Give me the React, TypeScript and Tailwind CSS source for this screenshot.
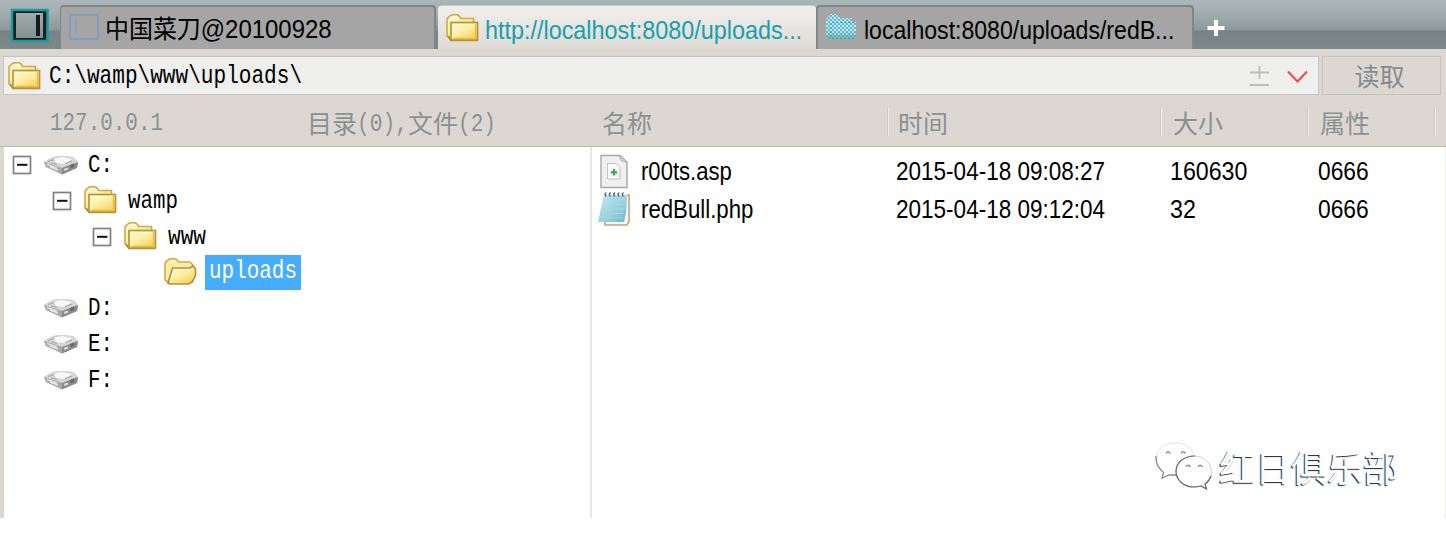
import { useLayoutEffect, useRef, useState } from "react";
import type { ReactNode } from "react";

/** Single line of condensed text stretched to the width of its box. */
function Fit({ className, children }: { className: string; children: ReactNode }) {
  const box = useRef<HTMLSpanElement>(null);
  const inner = useRef<HTMLSpanElement>(null);
  const [scale, setScale] = useState(1);
  useLayoutEffect(() => {
    if (box.current && inner.current && inner.current.offsetWidth) {
      setScale(box.current.clientWidth / inner.current.offsetWidth);
    }
  }, []);
  return (
    <span ref={box} className={"block shrink-0 whitespace-nowrap " + className}>
      <span ref={inner} className="inline-block origin-left" style={{ transform: `scaleX(${scale})` }}>
        {children}
      </span>
    </span>
  );
}

const sans = "font-['Liberation_Sans','Noto_Sans_CJK_SC',sans-serif] text-[25px] leading-[30px]";
const mono = "font-['Liberation_Mono','Noto_Sans_CJK_SC',monospace] text-[25px] leading-[30px] pt-[2px]";

function Folder({ className = "" }: { className?: string }) {
  return (
    <svg width="34" height="28" viewBox="0 0 34 28" className={"shrink-0 " + className}>
      <defs>
        <linearGradient id="fold" x1="0" y1="0" x2="0.7" y2="1">
          <stop offset="0" stopColor="#fffbdc" />
          <stop offset="0.55" stopColor="#feeda0" />
          <stop offset="1" stopColor="#f6d15f" />
        </linearGradient>
      </defs>
      <path d="M1 5 Q4 1 7 0.800 H11 Q13 1 14.500 4.500 H27.500 V25 H4 L1 22 Z" fill="url(#fold)" stroke="#cfa84e" strokeWidth="1.6" />
      <path d="M2 22 L5 26.500 H31.500" fill="none" stroke="#b08c35" strokeWidth="1.6" />
      <rect x="5" y="8.500" width="26.500" height="17.500" fill="url(#fold)" stroke="#bd9433" strokeWidth="1.7" />
      <path d="M29.500 10 V24.500 H7" fill="none" stroke="#e9bc4a" strokeWidth="1.3" />
      <path d="M7 24 V10.500 H28" fill="none" stroke="#fffbe0" strokeWidth="1.2" />
    </svg>
  );
}

function OpenFolder() {
  return (
    <svg width="34" height="28" viewBox="0 0 34 28" className="mb-[1px] shrink-0">
      <path d="M1 5 Q4 1 7 0.800 H11 Q13 1 14.500 4 H26 L28.500 6.500 V24 H4 L1 22 Z" fill="#fcedaa" stroke="#cfa84e" strokeWidth="1.6" />
      <path d="M4 25 L8.500 10 H26 L29 8 L31.500 11 V17 L28.500 23.500 L25 26 H6 Z" fill="url(#fold)" stroke="#b9902f" strokeWidth="1.7" />
      <path d="M6.500 23 L10 11.500 H27" fill="none" stroke="#fffbe0" strokeWidth="1.2" />
    </svg>
  );
}

function Drive() {
  return (
    <svg width="35" height="20" viewBox="0 0 35 20" className="shrink-0">
      <path d="M0 7 L9 2 L17 1 L29 2 L34 7 L33 13 L18 19.500 L11 16 L2 12 Z" fill="#b8b8b8" />
      <path d="M0 7 L9 2 L17 1 L29 2 L34 7 L18 13 Z" fill="#d6d6d6" />
      <path d="M10 4 L18 2 L28 4 L21 9 L12 8 Z" fill="#f8f8f8" />
      <path d="M0 7 L18 13 V19.500 L11 16 L2 12 Z" fill="#a8a8a8" />
      <path d="M18 13 L34 7 L33 13 L18 19.500 Z" fill="#8a8a8a" />
      <path d="M3 9.500 L13 13 M6 12 L14 15" stroke="#e2e2e2" strokeWidth="1.800" />
      <path d="M20 15 L24 13.500" stroke="#dadada" strokeWidth="2.200" />
      <path d="M26 10 L30 8.500 V12 L27 13 Z" fill="#666" />
      <path d="M4 6.500 L10 4.500 M7 8 L13 9.500 M21 8.500 L28 6" stroke="#a2a2a2" />
    </svg>
  );
}

function Minus() {
  return (
    <svg width="20" height="20" viewBox="0 0 20 20" className="shrink-0">
      <rect x="1.500" y="1.500" width="17" height="17" fill="#fff" stroke="#808080" strokeWidth="1.7" />
      <path d="M5 9.800 H15.500" stroke="#111" strokeWidth="2" />
    </svg>
  );
}

function WindowIcon() {
  return (
    <svg width="39" height="35" viewBox="0 0 39 35" className="shrink-0">
      <defs>
        <linearGradient id="win" x1="0" y1="0" x2="0" y2="1">
          <stop offset="0" stopColor="#a1abac" />
          <stop offset="1" stopColor="#849090" />
        </linearGradient>
      </defs>
      <rect x="2" y="2" width="35.500" height="31" fill="#1a1f1f" stroke="#199da3" strokeWidth="2.500" />
      <rect x="6" y="5" width="27" height="25" fill="url(#win)" />
      <rect x="26" y="7" width="4" height="21" fill="#161a1a" />
    </svg>
  );
}

function TerminalFolder() {
  return (
    <svg width="33" height="28" viewBox="0 0 33 28" className="mt-[6px] shrink-0">
      <defs>
        <pattern id="dots" width="4" height="4" patternUnits="userSpaceOnUse">
          <rect width="4" height="4" fill="#70b4cc" />
          <rect width="2" height="2" fill="#c8f4f4" />
          <rect x="2" y="2" width="2" height="2" fill="#b5ebe8" />
        </pattern>
        <linearGradient id="shade" x1="0" y1="0" x2="0" y2="1">
          <stop offset="0" stopColor="#60c9f0" stopOpacity="0.1" />
          <stop offset="0.7" stopColor="#60b9c8" stopOpacity="0.15" />
          <stop offset="1" stopColor="#4e9a8c" stopOpacity="0.75" />
        </linearGradient>
      </defs>
      <path d="M0 6 L5 1 H10 L14 5 H26 V9 H30 V26 H4 L0 22 Z" fill="url(#dots)" />
      <path d="M0 6 L5 1 H10 L14 5 H26 V9 H30 V26 H4 L0 22 Z" fill="url(#shade)" />
      <path d="M5 24 V9.500 H29" fill="none" stroke="#4a9cab" strokeDasharray="2 2" strokeWidth="1.2" />
    </svg>
  );
}

function AspFile() {
  return (
    <svg width="28" height="35" viewBox="0 0 28 35" className="shrink-0">
      <path d="M1 1.500 H20 L27 8 V33.500 H1 Z" fill="#efefef" stroke="#a8a8a8" strokeWidth="1.4" />
      <path d="M20 1.500 Q19 8 27 8 Z" fill="#d8d8d8" stroke="#aaa" />
      <path d="M7.500 9.500 H16 L20 13.500 V25 H7.500 Z" fill="#fafafa" stroke="#c3c3c3" />
      <path d="M14 15 V21.500 M10.800 18.300 H17.200" stroke="#37ad4d" strokeWidth="2.200" />
    </svg>
  );
}

function Notepad() {
  return (
    <svg width="34" height="36" viewBox="0 0 34 36" className="shrink-0">
      <defs>
        <linearGradient id="note" x1="0" y1="0" x2="1" y2="1">
          <stop offset="0" stopColor="#c6e8ef" />
          <stop offset="0.6" stopColor="#98d0de" />
          <stop offset="1" stopColor="#6cb4c8" />
        </linearGradient>
      </defs>
      <path d="M30 4 H32 V31 L30 34 H8 V31" fill="#f8f6f0" stroke="#c1a384" strokeWidth="1.6" />
      <path d="M7 4 H30 L29 22 L27 31 H1 L5 12 Z" fill="url(#note)" />
      <path d="M8 9 H28 M7 13.5 H27.5 M6 18 H27 M5 22.5 H26.5 M4 27 H26" stroke="#a8d8e2" strokeWidth="0.9" />
      <path d="M9 5.500 Q7 2 9.500 2 M13.300 5.500 Q11.300 2 13.800 2 M17.600 5.500 Q15.600 2 18.100 2 M21.900 5.500 Q19.900 2 22.400 2 M26.200 5.500 Q24.200 2 26.700 2" fill="none" stroke="#4c6a7a" strokeWidth="1.5" />
    </svg>
  );
}

function ChatLogo() {
  return (
    <svg width="60" height="52" viewBox="0 0 60 52" className="shrink-0">
      <path d="M40 15 C36 6 30 3 21 3 C9 3 2 10 2 19" fill="#fff" stroke="#e4e4e4" />
      <path d="M2 16 C1.500 25 5 28 9.500 32.500 L8 38 L15 35 H22" fill="none" stroke="#8a8a8a" strokeWidth="1.3" />
      <path d="M40 16 C29 16 22 23 22 31.500 C22 40 30 47 40 47 C43 47 45 46.500 47 46 L52.500 49 L51 44 C55 41 57.500 37 57.500 32 C57.500 23 50 16 40 16 Z" fill="#fff" stroke="#ccc" strokeWidth="0.9" />
      <path d="M41 16 C29 16 22 23 22 31.500 C22 40 30 47 40 47 C43 47 45 46.500 47 46 L52.500 49 L51 44 C54 42 56 39 57 36" fill="none" stroke="#666" strokeWidth="1.2" />
      <path d="M12 13.500 Q14 10 16.500 13.500 M27 13.500 Q29 10 31.500 13.500 M32 27 Q34 23.500 36.500 27 M44 27 Q46 23.500 48.500 27" fill="none" stroke="#8b8b8b" strokeWidth="1.3" />
    </svg>
  );
}

const drives = ["D:", "E:", "F:"];

export default function App() {
  return (
    <div className="flex h-[534px] w-[1446px] flex-col overflow-hidden bg-white text-black">
      <div className="flex h-[49px] shrink-0 bg-[linear-gradient(#abb6b9_0%,#a6b1b3_20%,#8e999b_60%,#788385_64%,#7c8788_100%)]">
        <div className="pl-[10px] pt-[8px]">
          <WindowIcon />
        </div>
        <div className="ml-[11px] mt-[5px] flex h-11 w-[376px] rounded-t-sm border-t-2 border-r-2 border-l border-[#7d8789] bg-[#a5a5a5] pl-2">
          <svg width="31" height="27" viewBox="0 0 31 27" className="mt-[7px] shrink-0">
            <rect x="1" y="1" width="28" height="24" fill="none" stroke="#7fa0bd" strokeWidth="2" />
            <path d="M7 6 V19" stroke="#7fa0bd" strokeWidth="1.600" />
          </svg>
          <Fit className={`${sans} ml-[5px] mt-[7px] w-[227px]`}>中国菜刀@20100928</Fit>
        </div>
        <div className="ml-[2px] mt-[5px] flex h-11 w-[378px] rounded-t-sm border-t border-[#c9cbc9] bg-gradient-to-b from-[#f1efed] to-[#dedad5] pl-[8px]">
          <Folder className="mt-[8px]" />
          <Fit className={`${sans} ml-[5px] mt-[9px] w-[317px] text-[#16a0ad]`}>http://localhost:8080/uploads...</Fit>
        </div>
        <div className="mt-[5px] flex h-11 w-[378px] rounded-t-sm border-x-2 border-t-2 border-[#7d8789] bg-[#a5a5a5] pl-[8px]">
          <TerminalFolder />
          <Fit className={`${sans} ml-[5px] mt-[8px] w-[310px]`}>localhost:8080/uploads/redB...</Fit>
        </div>
        <svg width="18" height="18" viewBox="0 0 18 18" className="ml-[13px] mt-[19px]">
          <path d="M9 1 V17 M0.500 9 H17.500" stroke="#fff" strokeWidth="4" />
        </svg>
      </div>

      <div className="flex h-[98px] shrink-0 flex-col border-b border-[#b9bbb5] bg-[#dcd8d1]">
        <div className="flex h-[46px] pl-[3px] pt-[7px]">
          <div className="flex h-[39px] w-[1316px] items-center border border-[#c5c6c1] bg-[#efefee] pl-1">
            <Folder />
            <Fit className={`${mono} ml-[7px] w-[253px]`}>C:\wamp\www\uploads\</Fit>
            <svg width="60" height="24" viewBox="0 0 60 24" className="mr-[9px] ml-auto">
              <path d="M10.500 2 V15 M1 8.500 H20 M1 21 H20" fill="none" stroke="#bdbdbd" strokeWidth="1.800" />
              <path d="M39 7.500 L48.500 17.500 L58 7.500" fill="none" stroke="#f0484e" strokeWidth="2" />
            </svg>
          </div>
          <div className="ml-[3px] flex h-[39px] w-[119px] justify-center border border-[#c5c5bf] pr-1 pt-[5px]">
            <Fit className={`${sans} w-[50px] text-[#858b91]`}>读取</Fit>
          </div>
        </div>
        <div className="flex h-[51px] pt-[14px] text-[#8b9094]">
          <Fit className={`${mono} ml-[50px] mt-[-2px] w-[113px]`}>127.0.0.1</Fit>
          <div className="ml-[144px] flex">
            <Fit className={`${sans} w-[50px]`}>目录</Fit>
            <Fit className={`${mono} mt-[-1px] w-[51px]`}>(0),</Fit>
            <Fit className={`${sans} w-[50px]`}>文件</Fit>
            <Fit className={`${mono} mt-[-1px] w-[38px]`}>(2)</Fit>
          </div>
          <Fit className={`${sans} ml-[106px] w-[50px]`}>名称</Fit>
          <div className="mt-[-1px] ml-[235px] h-7 w-[2px] border-r border-l border-r-[#efedea] border-l-[#cfcbc5]" />
          <Fit className={`${sans} ml-[9px] w-[50px]`}>时间</Fit>
          <div className="mt-[-1px] ml-[212px] h-7 w-[2px] border-r border-l border-r-[#efedea] border-l-[#cfcbc5]" />
          <Fit className={`${sans} ml-[11px] w-[50px]`}>大小</Fit>
          <div className="mt-[-1px] ml-[84px] h-7 w-[2px] border-r border-l border-r-[#efedea] border-l-[#cfcbc5]" />
          <Fit className={`${sans} ml-[11px] w-[50px]`}>属性</Fit>
          <div className="mt-[-1px] ml-[64px] h-7 w-[2px] border-r border-l border-r-[#efedea] border-l-[#cfcbc5]" />
        </div>
      </div>

      <div className="flex h-[371px] shrink-0 border-r border-l-4 border-r-[#efeeeb] border-l-[#dcd8d1]">
        <div className="w-[588px] border-r-2 border-[#e9e7e4]">
          <div className="flex h-9 items-center pl-[8px]">
            <Minus />
            <div className="w-[12px]" />
            <Drive />
            <Fit className={`${mono} ml-[9px] w-[25px]`}>C:</Fit>
          </div>
          <div className="flex h-9 items-center pl-[48px]">
            <Minus />
            <Folder className="mb-[2px] ml-[12px]" />
            <Fit className={`${mono} ml-[10px] w-[50px]`}>wamp</Fit>
          </div>
          <div className="flex h-9 items-center pl-[88px]">
            <Minus />
            <Folder className="mb-[2px] ml-[12px]" />
            <Fit className={`${mono} ml-[10px] w-[38px]`}>www</Fit>
          </div>
          <div className="flex h-[35px] items-center pl-[160px]">
            <OpenFolder />
            <div className="ml-[7px] h-[35px] w-[96px] bg-[#46acfe] pl-1 text-white">
              <Fit className={`${mono} w-[88px]`}>uploads</Fit>
            </div>
          </div>
          {drives.map((name) => (
            <div key={name} className="flex h-9 items-center pl-[40px]">
              <Drive />
              <Fit className={`${mono} ml-[9px] w-[25px]`}>{name}</Fit>
            </div>
          ))}
        </div>
        <div className="flex flex-1 flex-col pt-[5px]">
          <div className="flex h-[38px] items-center">
            <div className="flex w-[49px] pl-[8px]">
              <AspFile />
            </div>
            <Fit className={`${sans} mr-[164px] w-[91px]`}>r00ts.asp</Fit>
            <Fit className={`${sans} mr-[65px] w-[209px]`}>2015-04-18 09:08:27</Fit>
            <Fit className={`${sans} mr-[71px] w-[77px]`}>160630</Fit>
            <Fit className={`${sans} w-[51px]`}>0666</Fit>
          </div>
          <div className="flex h-[38px] items-center">
            <div className="flex w-[49px] pl-[5px]">
              <Notepad />
            </div>
            <Fit className={`${sans} mr-[143px] w-[112px]`}>redBull.php</Fit>
            <Fit className={`${sans} mr-[65px] w-[209px]`}>2015-04-18 09:12:04</Fit>
            <Fit className={`${sans} mr-[122px] w-[26px]`}>32</Fit>
            <Fit className={`${sans} w-[51px]`}>0666</Fit>
          </div>
          <div className="mt-[212px] ml-[562px] flex">
            <ChatLogo />
            <Fit className="ml-[5px] mt-[6px] w-[180px] font-['Noto_Sans_CJK_SC',sans-serif] text-[36px] leading-[40px] font-normal text-white [text-shadow:-1px_1px_1px_#222]">
              红日俱乐部
            </Fit>
          </div>
        </div>
      </div>
    </div>
  );
}
